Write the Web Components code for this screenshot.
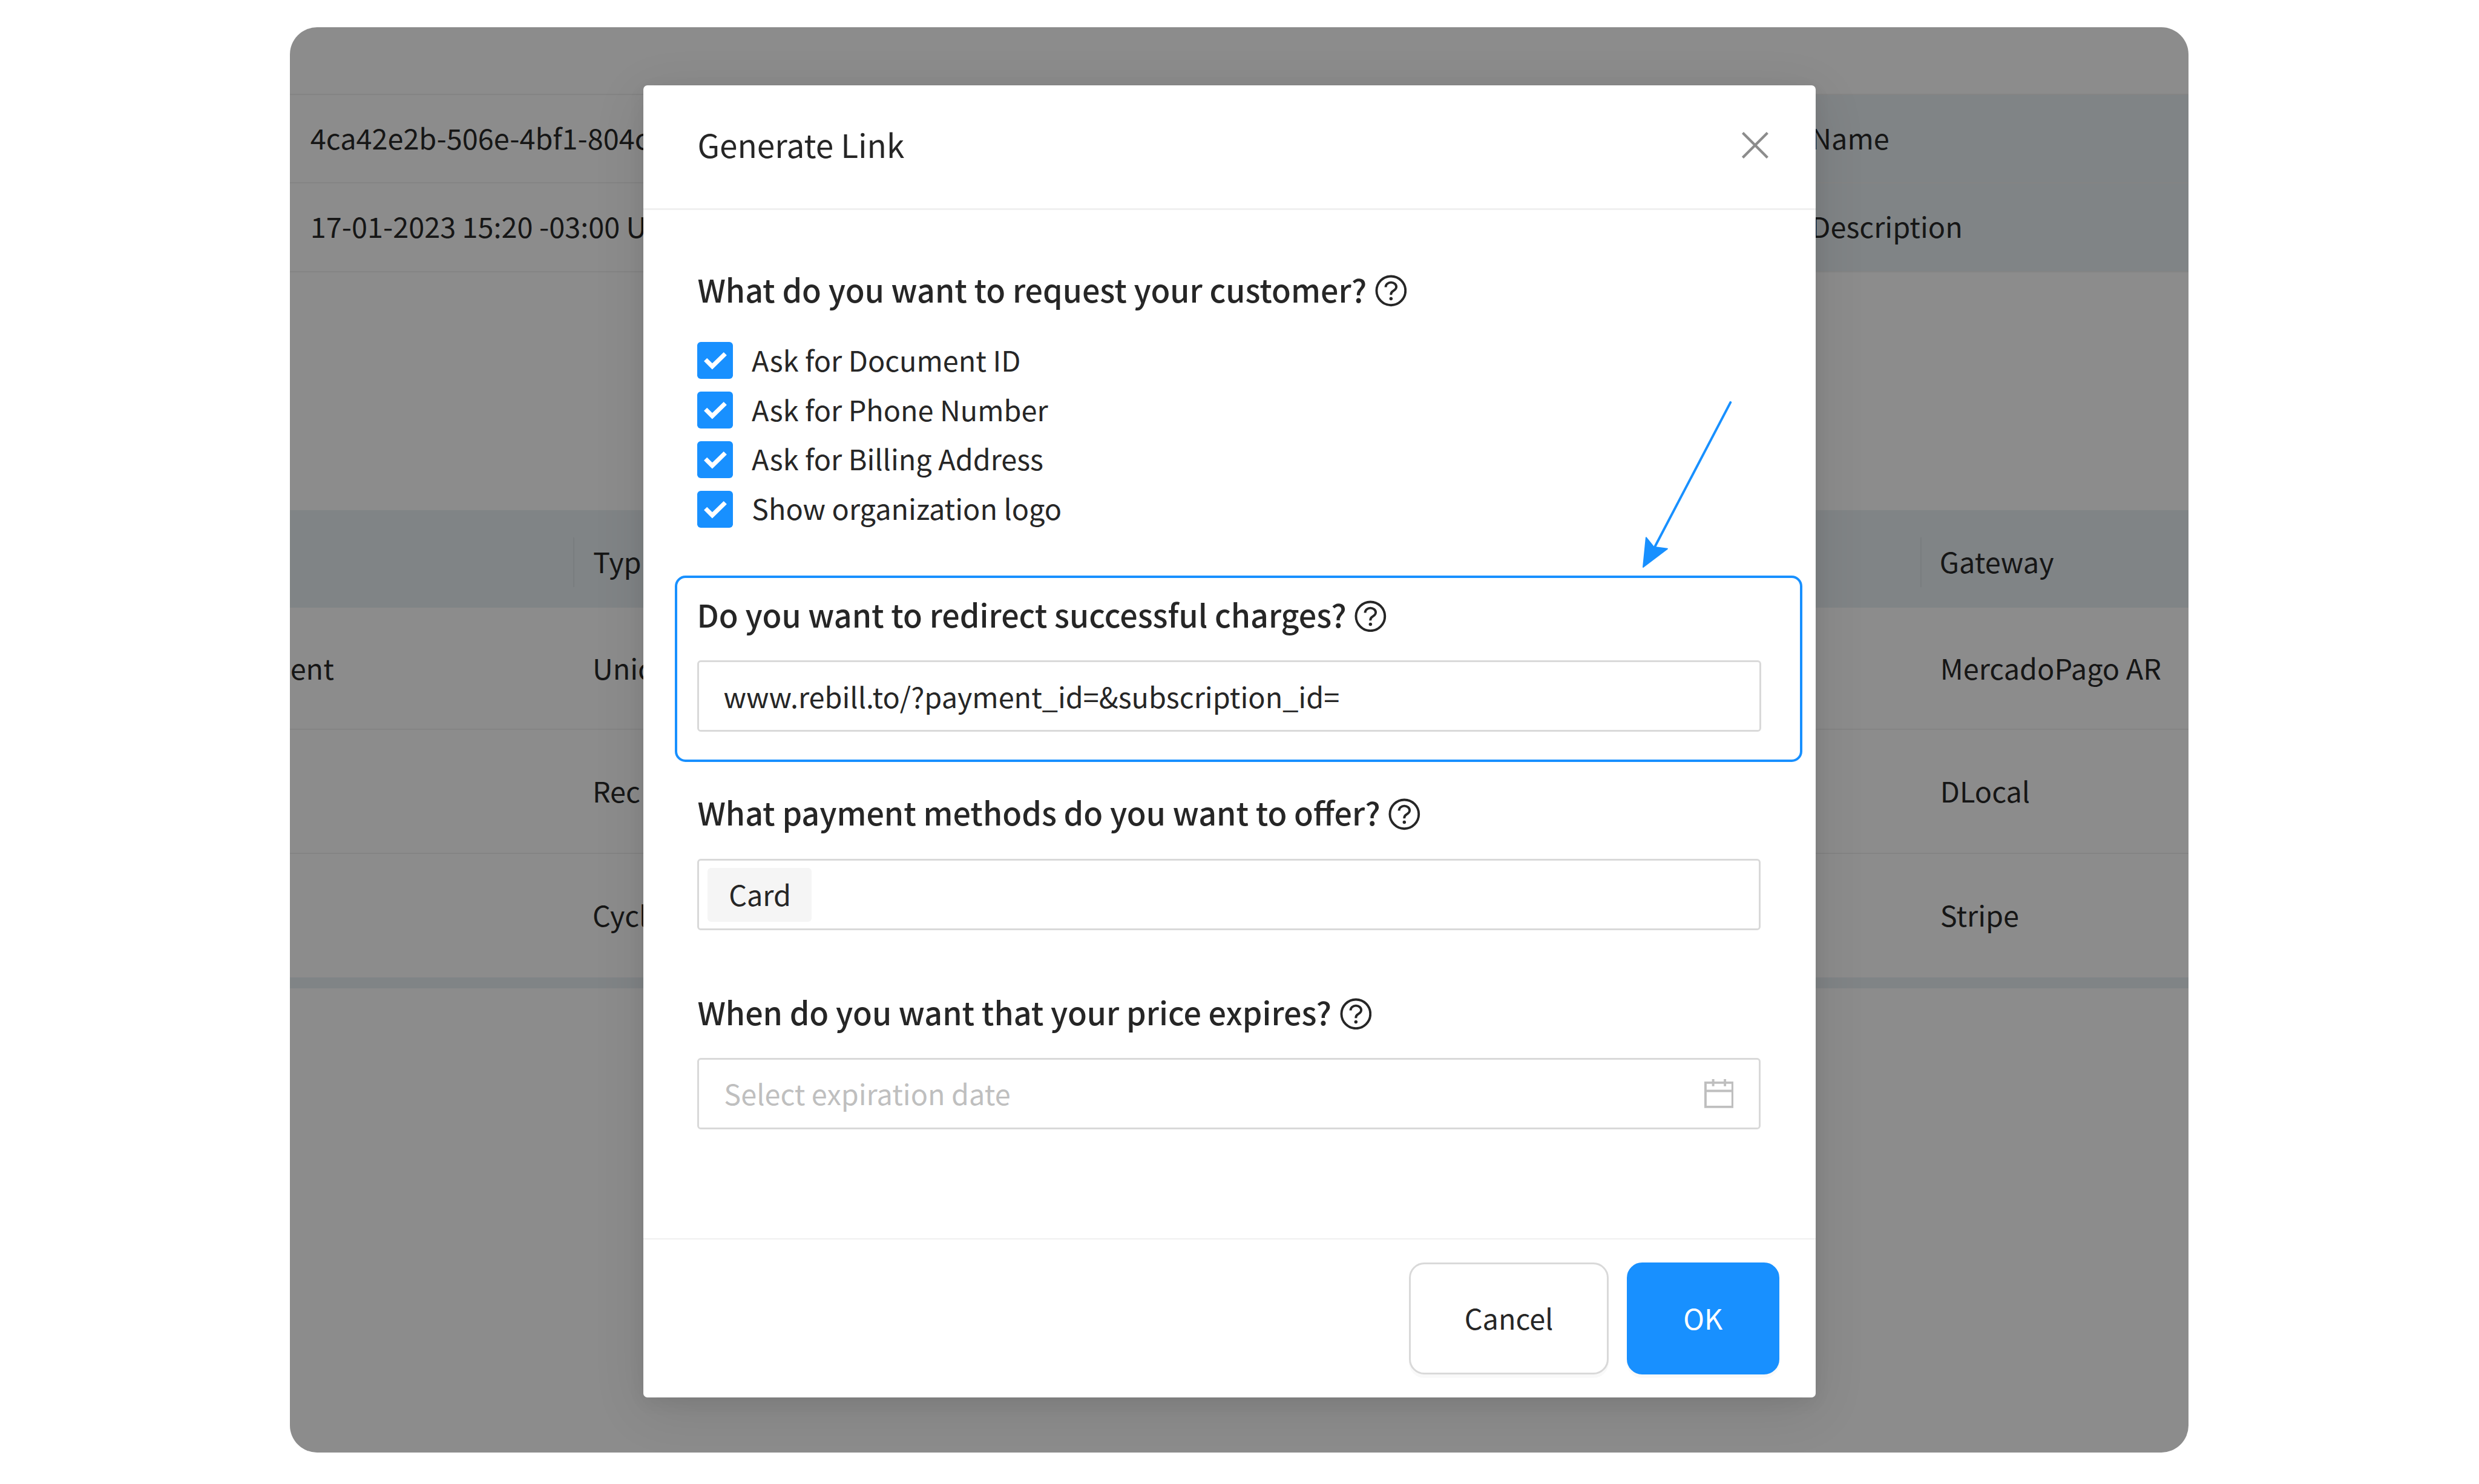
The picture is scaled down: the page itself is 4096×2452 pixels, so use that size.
<!DOCTYPE html>
<html lang="en">
<head>
<meta charset="utf-8">
<title>Generate Link</title>
<style>
  html, body { margin: 0; background: #fff; }
  body { zoom: 0.975; font-family: "Noto Sans CJK SC", "Noto Sans", sans-serif; color: #262626; }
  .checks { margin-top: 47px; }
</style>
</head>
<body>
<app-stage>
  <info-table slot="back"></info-table>
  <plans-table slot="back"></plans-table>
  <link-modal slot="modal">
    <span slot="title">Generate Link</span>
    <form-heading>What do you want to request your customer?</form-heading>
    <div class="checks">
      <check-row>Ask for Document ID</check-row>
      <check-row>Ask for Phone Number</check-row>
      <check-row>Ask for Billing Address</check-row>
      <check-row>Show organization logo</check-row>
    </div>
    <highlight-box>
      <form-heading>Do you want to redirect successful charges?</form-heading>
      <text-field>www.rebill.to/?payment_id=&amp;subscription_id=</text-field>
    </highlight-box>
    <form-heading class="after-box">What payment methods do you want to offer?</form-heading>
    <text-field tag="Card"></text-field>
    <form-heading class="next">When do you want that your price expires?</form-heading>
    <text-field placeholder="Select expiration date" calendar></text-field>
    <modal-button slot="footer">Cancel</modal-button>
    <modal-button slot="footer" primary>OK</modal-button>
  </link-modal>
</app-stage>

<script>
const sheet = `<style>:host { display: block; box-sizing: border-box; } * { box-sizing: border-box; }</style>`;

class AppStage extends HTMLElement {
  constructor() {
    super();
    this.attachShadow({ mode: 'open' });
    this.shadowRoot.innerHTML = `${sheet}
      <style>
        :host { padding: 46px 491px 0 491px; height: 2515px; overflow: hidden; }
        .frame {
          position: relative;
          width: 3218px;
          height: 2416px;
          padding-top: 113px;
          border-radius: 46px;
          background: #8c8c8c;
          overflow: hidden;
          color: #161616;
        }
        .modal { position: absolute; left: 599px; top: 99px; }
      </style>
      <div class="frame">
        <slot name="back"></slot>
        <div class="modal"><slot name="modal"></slot></div>
      </div>`;
  }
}

class InfoTable extends HTMLElement {
  constructor() {
    super();
    this.attachShadow({ mode: 'open' });
    const rows = [
      ['4ca42e2b-506e-4bf1-804c', 'Name'],
      ['17-01-2023 15:20 -03:00 U', 'Description'],
    ];
    this.shadowRoot.innerHTML = `${sheet}
      <style>
        :host { font-size: 48px; }
        .row {
          display: grid;
          grid-template-columns: 2578px 1fr;
          height: 150px;
          border-top: 3px solid #848484;
          white-space: nowrap;
        }
        .row:last-child { border-bottom: 3px solid #848484; height: 153px; }
        .row > div { display: flex; align-items: center; padding-bottom: 6px; }
        .val { padding-left: 35px; }
        .key { background: #808486; }
      </style>
      ${rows.map(r => `<div class="row"><div class="val">${r[0]}</div><div class="key">${r[1]}</div></div>`).join('')}`;
  }
}

class PlansTable extends HTMLElement {
  constructor() {
    super();
    this.attachShadow({ mode: 'open' });
    const rows = [
      ['ent', 'Unic', 'MercadoPago AR', 207],
      ['', 'Rec', 'DLocal', 210],
      ['', 'Cycl', 'Stripe', 209],
    ];
    this.shadowRoot.innerHTML = `${sheet}
      <style>
        :host { margin-top: 403px; font-size: 48px; }
        .row {
          display: grid;
          grid-template-columns: 480px 2283px 1fr;
          align-items: center;
          border-bottom: 3px solid #848484;
          white-space: nowrap;
        }
        .row:nth-last-child(2) { border-bottom: 0; }
        .row > div { padding-bottom: 4px; }
        .head { height: 165px; background: #808486; border: 0; padding-top: 11px; }
        .head > div { height: 84px; display: flex; align-items: center; padding-bottom: 6px; }
        .head .sep { border-left: 3px solid #797d7f; }
        .first { padding-left: 1px; }
        .second { padding-left: 32px; }
        .third { padding-left: 31px; }
        .bar { height: 19px; background: #808486; }
      </style>
      <div class="row head">
        <div></div>
        <div class="sep second">Typ</div>
        <div class="sep third">Gateway</div>
      </div>
      ${rows.map(r => `<div class="row" style="height:${r[3]}px">
        <div class="first">${r[0]}</div>
        <div class="second" style="padding-left:33px">${r[1]}</div>
        <div class="third" style="padding-left:34px">${r[2]}</div>
      </div>`).join('')}
      <div class="bar"></div>`;
  }
}

class LinkModal extends HTMLElement {
  constructor() {
    super();
    this.attachShadow({ mode: 'open' });
    this.shadowRoot.innerHTML = `${sheet}
      <style>
        :host { width: 1987px; height: 2223px; color: #262626; }
        .box {
          display: flex;
          flex-direction: column;
          height: 100%;
          background: #fff;
          border-radius: 7px;
          box-shadow: 0 20px 90px rgba(0, 0, 0, .1), 0 8px 30px rgba(0, 0, 0, .06);
        }
        header {
          display: flex;
          align-items: center;
          justify-content: space-between;
          height: 211px;
          padding: 0 80px 6px 92px;
          border-bottom: 4px solid #f0f0f0;
          font-size: 54.5px;
        }
        header slot { display: block; padding-bottom: 5px; }
        main { flex: 1; padding: 97px 93px 0 92px; }
        footer {
          display: flex;
          justify-content: flex-end;
          gap: 31px;
          height: 270px;
          padding: 39px 62px 0 0;
          border-top: 3px solid #f0f0f0;
        }
        svg { display: block; }
      </style>
      <div class="box">
        <header>
          <slot name="title"></slot>
          <svg width="45" height="45" viewBox="0 0 45 45" fill="none" stroke="#8c8c8c" stroke-width="4.4">
            <path d="M1.5 1.5L43.5 43.5M43.5 1.5L1.5 43.5"/>
          </svg>
        </header>
        <main><slot></slot></main>
        <footer><slot name="footer"></slot></footer>
      </div>`;
  }
}

class FormHeading extends HTMLElement {
  constructor() {
    super();
    this.attachShadow({ mode: 'open' });
    this.shadowRoot.innerHTML = `${sheet}
      <style>
        :host { display: flex; align-items: center; gap: 14px; height: 80px; font-size: 53.3px; font-weight: 500; line-height: 72px; white-space: nowrap; }
        :host(.after-box) { margin-top: 49px; margin-bottom: 36px; }
        :host(.next) { margin-top: 101px; margin-bottom: 35px; }
        slot { display: block; padding-bottom: 6px; }
        svg { display: block; flex: none; }
      </style>
      <slot></slot>
      <svg width="54" height="54" viewBox="0 0 54 54" fill="none" stroke="#262626">
        <circle cx="27" cy="27" r="24.500" stroke-width="4"/>
        <path d="M18 21c0-4.600 4-8 9-8s9 3.300 9 7.500c0 3.400-2.200 5-4.800 6.600-2.500 1.500-4.200 2.900-4.200 5.900v1" stroke-width="4"/>
        <circle cx="27" cy="40.500" r="2.800" fill="#262626" stroke="none"/>
      </svg>`;
  }
}

class CheckRow extends HTMLElement {
  constructor() {
    super();
    this.attachShadow({ mode: 'open' });
    this.shadowRoot.innerHTML = `${sheet}
      <style>
        :host { display: flex; align-items: center; gap: 32px; height: 62px; margin-top: 22px; font-size: 48px; white-space: nowrap; }
        :host(:first-child) { margin-top: 0; }
        .box { flex: none; width: 60px; height: 62px; border-radius: 6px; background: #1890ff; }
        slot { display: block; padding-bottom: 5px; }
        svg { display: block; }
      </style>
      <div class="box">
        <svg width="60" height="62" viewBox="0 0 60 62" fill="none" stroke="#fff" stroke-width="7.500">
          <path d="M14 30L25.500 41.500L47.500 20"/>
        </svg>
      </div>
      <slot></slot>`;
  }
}

class HighlightBox extends HTMLElement {
  constructor() {
    super();
    this.attachShadow({ mode: 'open' });
    this.shadowRoot.innerHTML = `${sheet}
      <style>
        :host {
          position: relative;
          margin: 82px -70px 0 -38px;
          padding: 24px 65px 45px 33px;
          height: 315px;
          border: 5px solid #1890ff;
          border-radius: 18px;
        }
        ::slotted(text-field) { margin-top: 35px; }
        /* the annotation arrow sits over the modal, above the box */
        svg { position: absolute; left: 1636px; top: -300px; }
      </style>
      <slot></slot>
      <svg width="160" height="290" viewBox="0 0 160 290">
        <path d="M149 2L19 250" fill="none" stroke="#1890ff" stroke-width="4" stroke-linecap="round"/>
        <path d="M6 231L1 281L42 250L19 247Z" fill="#1890ff" stroke="#1890ff" stroke-width="2" stroke-linejoin="round"/>
      </svg>`;
  }
}

class TextField extends HTMLElement {
  constructor() {
    super();
    this.attachShadow({ mode: 'open' });
    const tag = this.getAttribute('tag');
    const placeholder = this.getAttribute('placeholder');
    const calendar = this.hasAttribute('calendar');
    this.shadowRoot.innerHTML = `${sheet}
      <style>
        :host { height: 121px; font-size: 48px; }
        .input {
          display: flex;
          align-items: center;
          justify-content: space-between;
          height: 100%;
          padding: 0 43px 0 42px;
          background: #fff;
          border: 4px solid #d9d9d9;
          border-radius: 6px;
          white-space: nowrap;
        }
        .input.tagged { padding-left: 14px; }
        .tag {
          display: flex;
          align-items: center;
          height: 92px;
          padding: 0 35px 4px 36px;
          border-radius: 6px;
          background: #f5f5f5;
        }
        .placeholder { color: #bfbfbf; padding-bottom: 4px; }
        svg { display: block; }
      </style>
      <div class="input ${tag ? 'tagged' : ''}">
        ${tag ? `<span class="tag">${tag}</span>` : ''}
        ${placeholder ? `<span class="placeholder">${placeholder}</span>` : ''}
        <slot></slot>
        ${calendar ? `<svg width="50" height="50" viewBox="0 0 50 50" fill="none" stroke="#bfbfbf" stroke-width="4">
          <path d="M2 6H48V47H2ZM2 20H48M15 0V12M35 0V12"/>
        </svg>` : ''}
      </div>`;
  }
}

class ModalButton extends HTMLElement {
  constructor() {
    super();
    this.attachShadow({ mode: 'open' });
    const primary = this.hasAttribute('primary');
    this.shadowRoot.innerHTML = `${sheet}
      <style>
        :host { font-size: 48px; }
        button {
          display: block;
          width: ${primary ? 258 : 338}px;
          height: 190px;
          padding: 0 0 4px;
          font: inherit;
          color: ${primary ? '#fff' : '#262626'};
          background: ${primary ? '#1890ff' : '#fff'};
          border: 4px solid ${primary ? '#1890ff' : '#d9d9d9'};
          border-radius: 26px;
          box-shadow: 0 6px 0 rgba(0, 0, 0, .025);
        }
      </style>
      <button type="button"><slot></slot></button>`;
  }
}

customElements.define('app-stage', AppStage);
customElements.define('info-table', InfoTable);
customElements.define('plans-table', PlansTable);
customElements.define('link-modal', LinkModal);
customElements.define('form-heading', FormHeading);
customElements.define('check-row', CheckRow);
customElements.define('highlight-box', HighlightBox);
customElements.define('text-field', TextField);
customElements.define('modal-button', ModalButton);
</script>
</body>
</html>
